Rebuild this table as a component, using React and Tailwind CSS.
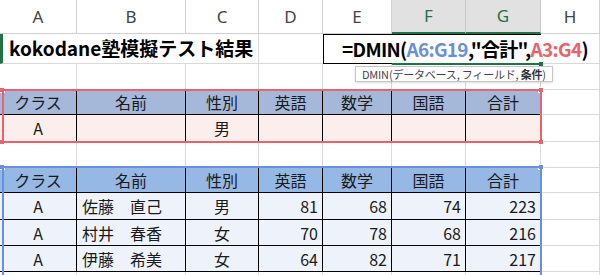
const cols = ["w-[77px]", "w-[109px]", "w-[73px]", "w-[64px]", "w-[69px]", "w-[74px]", "w-[75px]", "w-[59px]"];
const letters = ["A", "B", "C", "D", "E", "F", "G", "H"];
const heads = ["クラス", "名前", "性別", "英語", "数学", "国語", "合計"];
const rows = [
  ["A", "佐藤　直己", "男", 81, 68, 74, 223],
  ["A", "村井　春香", "女", 70, 78, 68, 216],
  ["A", "伊藤　希美", "女", 64, 82, 71, 217],
];

const GridRow = ({ h, children }) => <div className={`flex ${h}`}>{children}</div>;

const EmptyRow = ({ h }) => (
  <GridRow h={h}>
    {cols.map((w, i) => (
      <div key={i} className={`${w} shrink-0 border-r border-b border-[#d9d9d9]`} />
    ))}
  </GridRow>
);

const TableRow = ({ h, cells, bg, align }) => (
  <GridRow h={h}>
    {cols.slice(0, 7).map((w, i) => (
      <div
        key={i}
        className={`${w} shrink-0 flex items-center text-[16px] border-b border-black ${i < 6 ? "border-r border-r-black" : "border-r border-r-[#d9d9d9]"} ${bg} ${align(i)}`}
      >
        {cells[i]}
      </div>
    ))}
    <div className={`${cols[7]} shrink-0 border-r border-b border-[#d9d9d9]`} />
  </GridRow>
);

const Handle = ({ className }) => <div className={`absolute w-[6px] h-[6px] border border-white ${className}`} />;

export default function App() {
  const headAlign = () => "justify-center";
  const dataAlign = (i) => (i === 1 ? "justify-start pl-[5px]" : i >= 3 ? "justify-end pr-[4px]" : "justify-center");

  return (
    <div className="relative w-[600px] h-[275px] overflow-hidden bg-white text-[#1a1a1a] font-['Noto_Sans_CJK_JP',sans-serif]">
      {/* column letters */}
      <div className="flex h-[34px]">
        {cols.map((w, i) => (
          <div
            key={i}
            className={`${w} shrink-0 flex items-center justify-center text-[17px] border-r border-b ${
              i === 5 || i === 6
                ? "bg-[#e1e1e1] text-[#217346] border-r-[#c8c8c8] border-b-2 border-b-[#217346]"
                : "text-[#444] border-[#d0d0d0]"
            } font-['Noto_Sans',sans-serif]`}
          >
            {letters[i]}
          </div>
        ))}
      </div>

      {/* row 1: title + formula */}
      <GridRow h="h-[30px]">
        <div className="w-[259px] shrink-0 flex items-center pl-[6px] border-r border-b border-[#d9d9d9] border-l-[3px] border-l-[#217346] text-[19px] font-bold text-black whitespace-nowrap">
          kokodane塾模擬テスト結果
        </div>
        <div className="w-[64px] shrink-0 border-b border-[#d9d9d9]" />
        <div className="w-[218px] shrink-0 flex items-center pl-[18px] border border-black border-r-0 bg-white text-[19px] font-bold tracking-[-0.7px] text-black whitespace-nowrap overflow-visible relative z-10">
          <span>=DMIN(</span>
          <span className="text-[#6a8fdc]">A6:G19</span>
          <span>,"合計",</span>
          <span className="text-[#e8646c]">A3:G4</span>
          <span className="inline-block w-[1px] h-[20px] bg-black" />
          <span>)</span>
        </div>
        <div className="w-[59px] shrink-0 border-r border-b border-[#d9d9d9]" />
      </GridRow>

      <EmptyRow h="h-[26px]" />
      <TableRow h="h-[25px]" cells={heads} bg="bg-[#a5b8da]" align={headAlign} />
      <TableRow h="h-[27px]" cells={["A", "", "男", "", "", "", ""]} bg="bg-[#fdeeee]" align={dataAlign} />
      <EmptyRow h="h-[26px]" />
      <TableRow h="h-[25px]" cells={heads} bg="bg-[#95b8e4]" align={headAlign} />
      {rows.map((r, i) => (
        <TableRow key={i} h={i === 0 ? "h-[27px]" : "h-[26px]"} cells={r} bg="bg-[#eef3fb]" align={dataAlign} />
      ))}
      <EmptyRow h="h-[26px]" />

      {/* selection green marks on row 1 */}
      <div className="absolute left-[392px] top-[63px] w-[149px] h-[2px] bg-[#217346] z-20" />
      <div className="absolute left-[539px] top-[62px] w-[4px] h-[4px] bg-[#217346] z-20" />

      {/* tooltip */}
      <div className="absolute left-[355px] top-[66px] h-[16px] px-[6px] flex items-center bg-white border border-[#c6c6c6] shadow-sm text-[11px] tracking-[-0.2px] text-[#444] whitespace-nowrap z-20">
        <span>
          DMIN(データベース, フィールド, <b className="font-bold text-[#333]">条件</b>)
        </span>
      </div>

      {/* criteria range (red) */}
      <div className="absolute left-[2px] top-[89px] w-[540px] h-[54px] border-2 border-[#e8636b] z-10" />
      <Handle className="left-[-1px] top-[87px] bg-[#e8636b]" />
      <Handle className="left-[-1px] top-[139px] bg-[#e8636b]" />
      <Handle className="left-[538px] top-[87px] bg-[#e8636b]" />
      <Handle className="left-[538px] top-[139px] bg-[#e8636b]" />

      {/* database range (blue) */}
      <div className="absolute left-[2px] top-[166px] w-[540px] h-[130px] border-2 border-[#6b8fe0] z-10" />
      <Handle className="left-[-1px] top-[164px] bg-[#6b8fe0]" />
      <Handle className="left-[538px] top-[164px] bg-[#6b8fe0]" />
    </div>
  );
}
